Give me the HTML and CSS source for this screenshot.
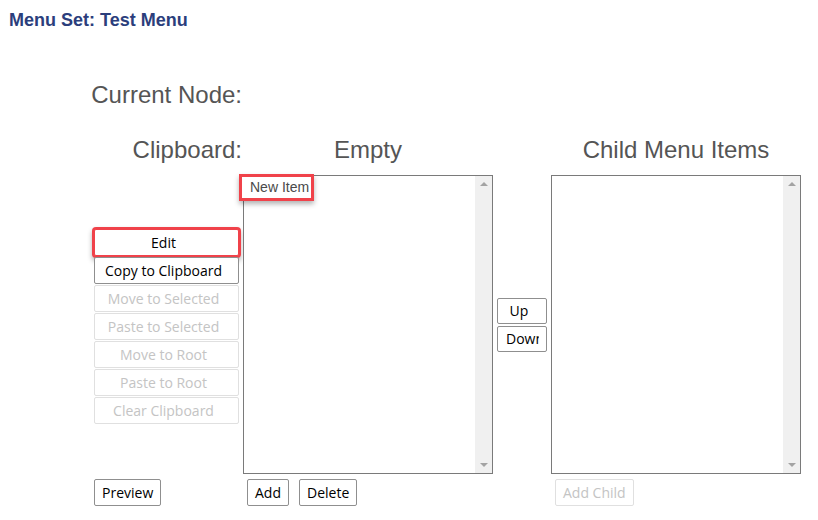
FILE: index.html
```html
<!DOCTYPE html>
<html>
<head>
<meta charset="utf-8">
<title>Menu Set: Test Menu</title>
<link rel="stylesheet" href="styles.css">
</head>
<body>
<h1 class="title">Menu Set: Test Menu</h1>
<div class="editor">
  <div class="label current">Current Node:</div>
  <div class="label clip">Clipboard:</div>
  <div class="heading h-items">Empty</div>
  <div class="heading h-child">Child Menu Items</div>

  <div class="actions">
    <button class="btn highlight">Edit</button>
    <button class="btn">Copy to Clipboard</button>
    <button class="btn" disabled>Move to Selected</button>
    <button class="btn" disabled>Paste to Selected</button>
    <button class="btn" disabled>Move to Root</button>
    <button class="btn" disabled>Paste to Root</button>
    <button class="btn" disabled>Clear Clipboard</button>
  </div>

  <div class="listbox lb-items">
    <div class="items">
      <div class="item selected">New Item</div>
    </div>
    <div class="scroll"><span class="arrow up"></span><span class="arrow down"></span></div>
  </div>

  <div class="order">
    <button class="btn ord">Up</button>
    <button class="btn ord"><span class="clip-text">Down</span></button>
  </div>

  <div class="listbox lb-child">
    <div class="items"></div>
    <div class="scroll"><span class="arrow up"></span><span class="arrow down"></span></div>
  </div>

  <div class="foot f-left"><button class="btn">Preview</button></div>
  <div class="foot f-items"><button class="btn">Add</button><button class="btn">Delete</button></div>
  <div class="foot f-child"><button class="btn" disabled>Add Child</button></div>
</div>
</body>
</html>
```
FILE: styles.css
```css
body {
  margin: 0;
  background: #ffffff;
  font-family: "Liberation Sans", Arial, sans-serif;
}

.title {
  margin: 10px 0 0 9px;
  font-size: 18px;
  line-height: 20px;
  font-weight: bold;
  color: #2b3e7c;
}

.editor {
  display: grid;
  grid-template-columns: 243px 250px 58px 250px;
  grid-template-rows: 55px 39px 304px 27px;
  margin-top: 51px;
}

.label,
.heading {
  font-size: 24px;
  line-height: 28px;
  color: #555555;
  align-self: start;
}

.label {
  grid-column: 1;
  text-align: right;
  padding-right: 1px;
}

.current { grid-row: 1; }
.clip { grid-row: 2; }

.heading {
  grid-row: 2;
  text-align: center;
}

.h-items { grid-column: 2; }
.h-child { grid-column: 4; }

.btn {
  box-sizing: border-box;
  height: 27px;
  padding: 0 7px;
  border: 1px solid #8f8f8f;
  border-radius: 2px;
  background: #ffffff;
  color: #000000;
  font-family: "Open Sans", "Noto Sans", sans-serif;
  font-size: 14px;
  line-height: 25px;
  white-space: nowrap;
}

.btn:disabled {
  color: #c4c4c4;
  border-color: #e0e0e0;
}

.actions {
  grid-row: 3;
  grid-column: 1;
  display: flex;
  flex-direction: column;
  gap: 1px;
  padding: 54px 0 0 94px;
}

.actions .btn {
  width: 145px;
  padding: 0 10px 0 4px;
}

.highlight {
  border-color: #f0424a;
  box-shadow: 0 0 0 2px #f0424a, 0 3px 5px 2px rgba(0, 0, 0, 0.3);
}

.listbox {
  grid-row: 3;
  box-sizing: border-box;
  height: 299px;
  border: 1px solid #7a7a7a;
  display: flex;
  background: #ffffff;
}

.lb-items { grid-column: 2; }
.lb-child { grid-column: 4; }

.items {
  flex: 1;
}

.item {
  box-sizing: border-box;
  width: 69px;
  height: 21px;
  margin: 1px 0 0 -2px;
  padding-left: 8px;
  font-size: 14px;
  line-height: 21px;
  color: #4a4a4a;
}

.item.selected {
  position: relative;
  background: #ffffff;
  box-shadow: 0 0 0 3px #f0424a, 0 3px 5px 3px rgba(0, 0, 0, 0.3);
}

.scroll {
  width: 17px;
  background: #f0f0f0;
  display: flex;
  flex-direction: column;
  justify-content: space-between;
  align-items: center;
  padding: 6px 0;
}

.arrow {
  width: 0;
  height: 0;
  border-left: 4px solid transparent;
  border-right: 4px solid transparent;
}

.arrow.up { border-bottom: 4px solid #a3a3a3; }
.arrow.down { border-top: 4px solid #a3a3a3; }

.order {
  grid-row: 3;
  grid-column: 3;
  display: flex;
  flex-direction: column;
  gap: 2px;
  padding: 123px 0 0 4px;
}

.ord {
  width: 50px;
  height: 26px;
  line-height: 24px;
  overflow: hidden;
}

.ord:first-child {
  padding: 0 10px 0 4px;
}

.clip-text {
  display: block;
  width: 33px;
  overflow: hidden;
  text-align: left;
  margin-left: 1px;
}

.foot {
  grid-row: 4;
  display: flex;
  gap: 10px;
  align-items: start;
}

.f-left { grid-column: 1; padding-left: 94px; }
.f-items { grid-column: 2; padding-left: 4px; }
.f-child { grid-column: 4; padding-left: 4px; }
```
